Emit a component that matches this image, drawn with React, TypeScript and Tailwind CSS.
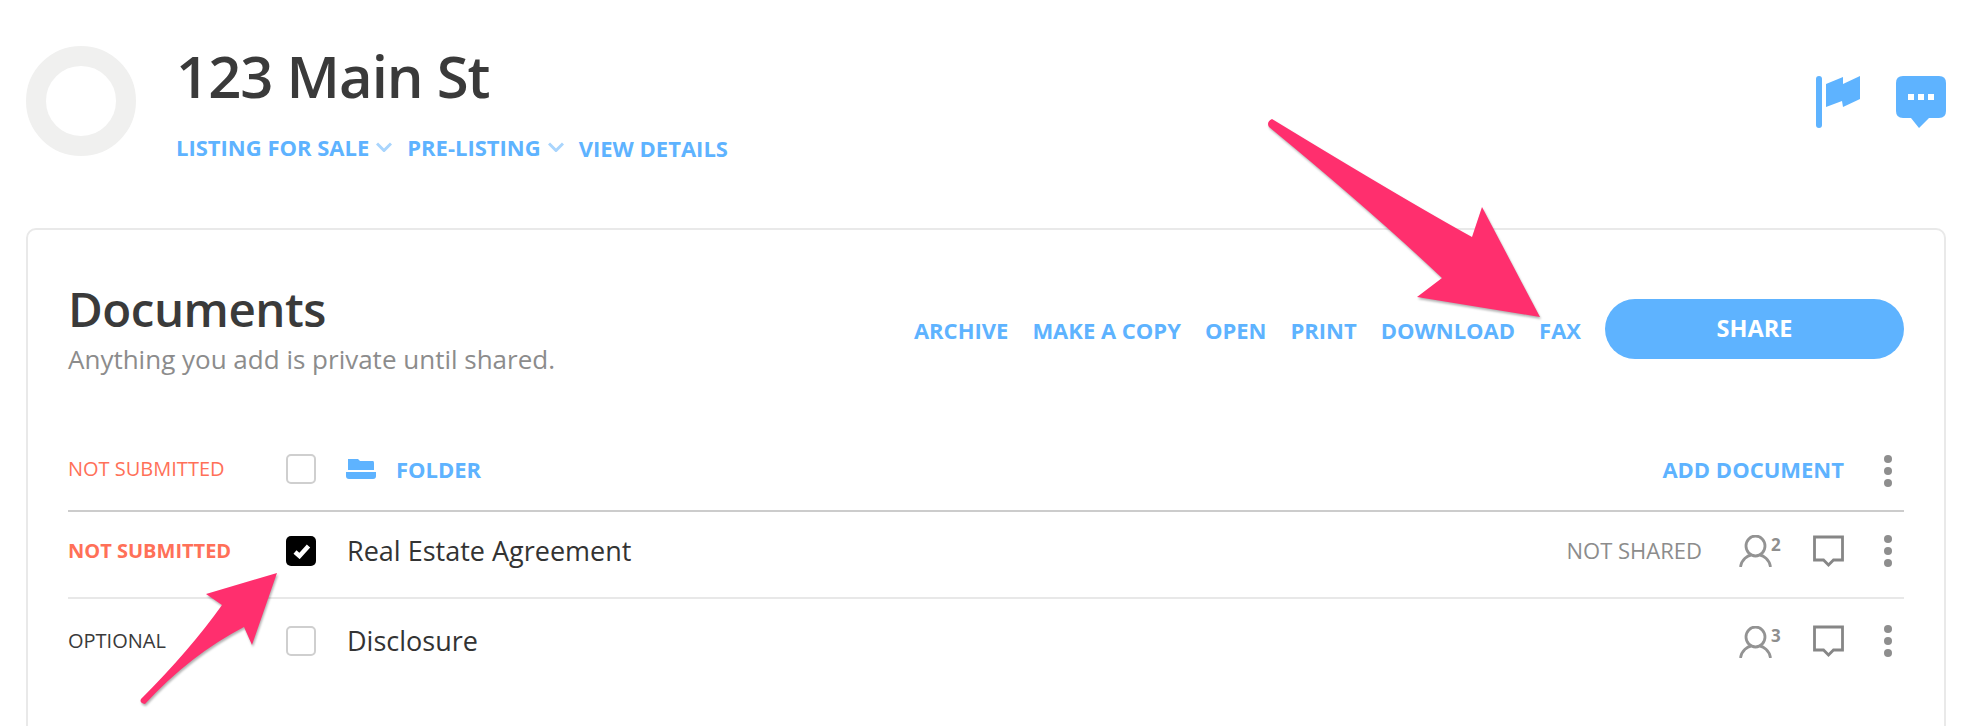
import React from 'react'

const font = { fontFamily: '"Open Sans", sans-serif' }

function Chevron() {
  return (
    <svg width="16" height="10" viewBox="0 0 16 10" className="ml-[7px] shrink-0">
      <path d="M1 1.500 L8 8.500 L15 1.500" fill="none" stroke="#a9d5fd" strokeWidth="3" />
    </svg>
  )
}

function Dots() {
  return (
    <svg width="10" height="32" viewBox="0 0 10 32" className="shrink-0">
      <circle cx="5" cy="4" r="4" fill="#8e8e8e" />
      <circle cx="5" cy="16" r="4" fill="#8e8e8e" />
      <circle cx="5" cy="28" r="4" fill="#8e8e8e" />
    </svg>
  )
}

function Person({ count }: { count: number }) {
  return (
    <div className="flex items-start w-[42px] h-[32px] mt-[1px]">
      <svg width="33" height="32" viewBox="0 0 33 32" className="shrink-0">
        <ellipse cx="16.500" cy="11" rx="9.500" ry="10" fill="none" stroke="#939393" strokeWidth="2.800" />
        <path d="M1.500 32 C2.500 24 9 20.500 12 20 M31.500 32 C30.500 24 24 20.500 21 20" fill="none" stroke="#939393" strokeWidth="2.800" />
      </svg>
      <span className="text-[17px] leading-[16px] font-bold text-[#8e8e8e] mt-[2px] -ml-[1px]">{count}</span>
    </div>
  )
}

function Comment() {
  return (
    <svg width="31" height="32" viewBox="0 0 31 32" className="shrink-0">
      <path d="M1.500 2 H29.500 V25 H20.500 L15.500 30 L10.500 25 H1.500 Z" fill="none" stroke="#868686" strokeWidth="2.800" />
    </svg>
  )
}

function Box({ checked }: { checked?: boolean }) {
  if (checked) {
    return (
      <div className="w-[30px] h-[30px] rounded-[5px] bg-black flex items-center justify-center shrink-0">
        <svg width="18" height="16" viewBox="0 0 18 16" className="ml-[1px]">
          <path d="M2 9 L6.500 13 L15.500 3" fill="none" stroke="#fff" strokeWidth="4.500" />
        </svg>
      </div>
    )
  }
  return <div className="w-[30px] h-[30px] rounded-[5px] border-2 border-[#cfcfcf] bg-white shrink-0" />
}

const actions = ['ARCHIVE', 'MAKE A COPY', 'OPEN', 'PRINT', 'DOWNLOAD', 'FAX']

export default function App() {
  return (
    <div className="h-[726px] overflow-hidden bg-white relative" style={font}>
      {/* top header */}
      <div className="flex pl-[26px] pr-[32px] pt-[46px] h-[228px]">
        <div className="w-[110px] h-[110px] rounded-full border-[20px] border-[#f0f0ef] shrink-0" />
        <div className="ml-[40px] -mt-[10px]">
          <h1 className="text-[58px] leading-[80px] font-semibold text-[#3a3a3a] tracking-[-1px]">123 Main St</h1>
          <div className="flex items-center mt-[15px] text-[22px] leading-[28px] font-bold text-[#5eb3ff]">
            <span>LISTING FOR SALE</span>
            <Chevron />
            <span className="ml-[15px]">PRE-LISTING</span>
            <Chevron />
            <span className="ml-[15px] mt-[3px]">VIEW DETAILS</span>
          </div>
        </div>
        <div className="ml-auto flex items-start gap-[34px] pt-[30px]">
          <svg width="46" height="52" viewBox="0 0 46 52">
            <rect x="0" y="0" width="6" height="52" rx="3" fill="#5eb3ff" />
            <path d="M10 8 L27 1 V8 L44 0 V23 L27 31 L26 25 L10 31 Z" fill="#5eb3ff" />
          </svg>
          <svg width="50" height="52" viewBox="0 0 50 52">
            <path d="M7 0 H43 Q50 0 50 7 V35 Q50 42 43 42 H33 L23 52 L15 42 H7 Q0 42 0 35 V7 Q0 0 7 0 Z" fill="#5eb3ff" />
            <rect x="12" y="18" width="6" height="6" fill="#fff" />
            <rect x="22" y="18" width="6" height="6" fill="#fff" />
            <rect x="32" y="18" width="6" height="6" fill="#fff" />
          </svg>
        </div>
      </div>

      {/* documents card */}
      <div className="mx-[26px] mr-[32px] h-[600px] border-2 border-[#e9e9e9] rounded-[10px] px-[40px]">
        <div className="flex items-start justify-between pt-[49px] h-[218px]">
          <div>
            <h2 className="text-[47.500px] leading-[60px] font-semibold text-[#3a3a3a] tracking-[-0.500px]">Documents</h2>
            <p className="text-[26px] leading-[34px] text-[#8c8c8c] mt-[3px]">Anything you add is private until shared.</p>
          </div>
          <div className="flex items-center gap-[24px] pt-[20px] text-[22px] font-bold text-[#5eb3ff]">
            {actions.map((a) => (
              <span key={a} className="pt-[2px]">{a}</span>
            ))}
            <button className="w-[299px] h-[60px] rounded-full bg-[#5eb3ff] text-white font-bold text-[23.500px]">SHARE</button>
          </div>
        </div>

        {/* header row */}
        <div className="flex items-center h-[64px] pb-[20px] border-b-2 border-[#cccccc]">
          <span className="w-[218px] text-[20px] text-[#ff7058]">NOT SUBMITTED</span>
          <Box />
          <svg width="30" height="20" viewBox="0 0 30 20" className="ml-[30px] shrink-0">
            <path d="M2 0 H12 L14 2 H27 Q28 2 28 4 V11 H2 Z" fill="#5eb3ff" />
            <path d="M0 13 H30 V17 Q30 20 27 20 H3 Q0 20 0 17 Z" fill="#5eb3ff" />
          </svg>
          <span className="ml-[20px] text-[22px] font-bold text-[#5eb3ff]">FOLDER</span>
          <span className="ml-auto text-[22px] font-bold text-[#5eb3ff]">ADD DOCUMENT</span>
          <div className="ml-[39px] mr-[11px] mt-[4px]"><Dots /></div>
        </div>

        <div className="flex items-center h-[87px] pb-[8px] border-b-2 border-[#e8e8e8]">
          <span className="w-[218px] text-[20px] font-bold text-[#ff7058]">NOT SUBMITTED</span>
          <Box checked />
          <span className="ml-[31px] mt-[1px] text-[27px] font-medium text-[#333333]">Real Estate Agreement</span>
          <span className="ml-auto text-[22px] text-[#8c8c8c]">NOT SHARED</span>
          <div className="ml-[37px]"><Person count={2} /></div>
          <div className="ml-[32px]"><Comment /></div>
          <div className="ml-[39px] mr-[11px]"><Dots /></div>
        </div>

        <div className="flex items-center h-[86px] pb-[2px]">
          <span className="w-[218px] text-[20px] text-[#3a3a3a]">OPTIONAL</span>
          <Box />
          <span className="ml-[31px] text-[27px] font-medium text-[#333333]">Disclosure</span>
          <div className="ml-auto"><Person count={3} /></div>
          <div className="ml-[32px]"><Comment /></div>
          <div className="ml-[39px] mr-[11px]"><Dots /></div>
        </div>
      </div>

      {/* annotation arrows */}
      <svg width="1978" height="726" viewBox="0 0 1978 726" className="absolute left-0 top-0 pointer-events-none drop-shadow-[1px_2px_1px_rgba(0,0,0,0.3)]">
        <path d="M1272 119 Q1405 200 1472 237 L1482 207 L1540 317 L1417 297 L1442 278 Q1370 210 1269 127 Q1266 122 1272 119 Z" fill="#ff2f6e" />
        <path d="M277 573 L252 645 L244 627 Q190 655 145 704 Q139 703 141 699 Q190 650 222 605 L206 594 Z" fill="#ff2f6e" />
      </svg>
    </div>
  )
}
